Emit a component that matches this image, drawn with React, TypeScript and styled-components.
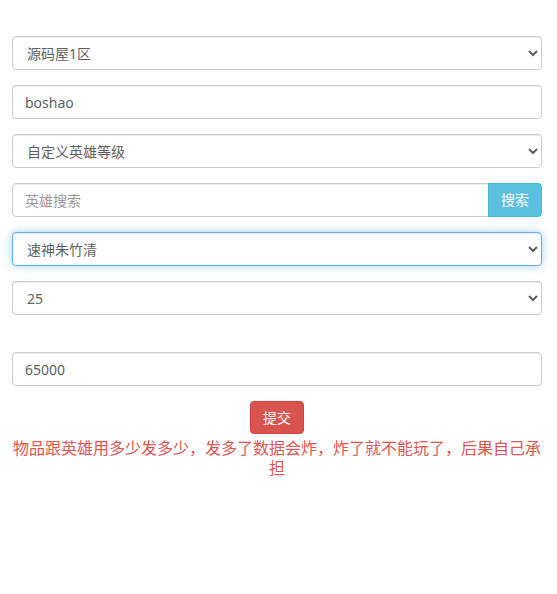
import React from 'react'
import styled, { createGlobalStyle, css } from 'styled-components'

const GlobalStyle = createGlobalStyle`
  * {
    box-sizing: border-box;
  }
  body {
    margin: 0;
    background: #fff;
    font-family: 'Noto Sans', 'Noto Sans CJK SC', sans-serif;
  }
`

const Wrapper = styled.form`
  display: flex;
  flex-direction: column;
  width: 557px;
  padding: 36px 15px 0 12px;
`

const Group = styled.div<{ gapAfter?: number }>`
  margin-bottom: ${({ gapAfter }) => gapAfter ?? 15}px;
`

const fieldBase = css`
  display: block;
  width: 100%;
  height: 34px;
  padding: 6px 12px;
  font-family: 'Noto Sans', 'Noto Sans CJK SC', sans-serif;
  font-size: 14px;
  line-height: 1.42857;
  color: #5f5f5f;
  background: #fff;
  border: 1px solid #ccc;
  border-radius: 4px;
  box-shadow: inset 0 1px 1px rgba(0, 0, 0, 0.075);
  outline: none;

  &::placeholder {
    color: #999;
  }
`

const focusRing = css`
  border-color: #66afe9;
  box-shadow: inset 0 1px 1px rgba(0, 0, 0, 0.075),
    0 0 8px rgba(102, 175, 233, 0.6);
`

const Input = styled.input<{ joined?: boolean }>`
  ${fieldBase}
  ${({ joined }) =>
    joined &&
    css`
      flex: 1;
      border-top-right-radius: 0;
      border-bottom-right-radius: 0;
    `}
`

const Select = styled.select<{ focused?: boolean }>`
  ${fieldBase}
  padding: 6px 8px 6px 10px;
  ${({ focused }) => focused && focusRing}
`

const InputGroup = styled.div`
  display: flex;
`

const SearchButton = styled.button`
  height: 34px;
  padding: 6px 12px;
  margin-left: -1px;
  font-family: 'Noto Sans', 'Noto Sans CJK SC', sans-serif;
  font-size: 14px;
  line-height: 1.42857;
  color: #fff;
  background: #5bc0de;
  border: 1px solid #46b8da;
  border-radius: 0 4px 4px 0;
`

const Actions = styled.div`
  display: flex;
  justify-content: center;
`

const SubmitButton = styled.button`
  height: 33px;
  padding: 5px 12px;
  font-family: 'Noto Sans', 'Noto Sans CJK SC', sans-serif;
  font-size: 14px;
  line-height: 1.42857;
  color: #fff;
  background: #d9534f;
  border: 1px solid #d43f3a;
  border-radius: 4px;
`

const Warning = styled.p`
  margin: 4px 0 0;
  font-size: 16px;
  line-height: 20px;
  color: #dc5652;
  text-align: center;
`

export default function App() {
  return (
    <>
      <GlobalStyle />
      <Wrapper onSubmit={(e) => e.preventDefault()}>
        <Group>
          <Select defaultValue="1">
            <option value="1">源码屋1区</option>
          </Select>
        </Group>
        <Group>
          <Input defaultValue="boshao" />
        </Group>
        <Group>
          <Select defaultValue="lv">
            <option value="lv">自定义英雄等级</option>
          </Select>
        </Group>
        <Group>
          <InputGroup>
            <Input joined placeholder="英雄搜索" />
            <SearchButton type="button">搜索</SearchButton>
          </InputGroup>
        </Group>
        <Group>
          <Select focused defaultValue="zzq">
            <option value="zzq">速神朱竹清</option>
          </Select>
        </Group>
        <Group gapAfter={37}>
          <Select defaultValue="25">
            <option value="25">25</option>
          </Select>
        </Group>
        <Group gapAfter={15}>
          <Input defaultValue="65000" />
        </Group>
        <Actions>
          <SubmitButton type="submit">提交</SubmitButton>
        </Actions>
        <Warning>
          物品跟英雄用多少发多少，发多了数据会炸，炸了就不能玩了，后果自己承担
        </Warning>
      </Wrapper>
    </>
  )
}
